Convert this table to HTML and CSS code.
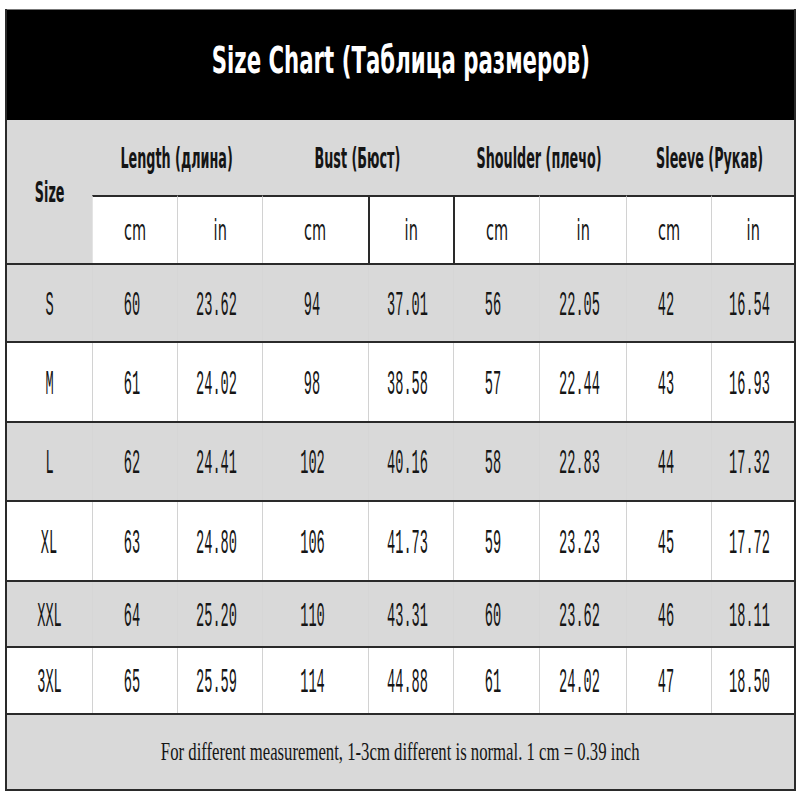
FILE: index.html
```html
<!DOCTYPE html>
<html lang="en">
<head>
<meta charset="utf-8">
<title>Size Chart</title>
<link rel="stylesheet" href="styles.css">
</head>
<body>
<div class="chart">
  <div class="title"><span class="title-text">Size Chart (Таблица размеров)</span></div>
  <div class="head">
    <div class="h-size"><span class="hd">Size</span></div>
    <div class="h-group"><span class="hd">Length (длина)</span></div>
    <div class="h-group"><span class="hd">Bust (Бюст)</span></div>
    <div class="h-group"><span class="hd">Shoulder (плечо)</span></div>
    <div class="h-group"><span class="hd">Sleeve (Рукав)</span></div>
    <div class="h-unit first"><span class="hd">cm</span></div>
    <div class="h-unit"><span class="hd">in</span></div>
    <div class="h-unit"><span class="hd">cm</span></div>
    <div class="h-unit dark"><span class="hd">in</span></div>
    <div class="h-unit dark"><span class="hd">cm</span></div>
    <div class="h-unit"><span class="hd">in</span></div>
    <div class="h-unit"><span class="hd">cm</span></div>
    <div class="h-unit"><span class="hd">in</span></div>
  </div>
  <div class="row gray r1">
    <div class="c"><span class="n">S</span></div><div class="c"><span class="n">60</span></div><div class="c"><span class="n">23.62</span></div><div class="c"><span class="n">94</span></div><div class="c"><span class="n">37.01</span></div><div class="c"><span class="n">56</span></div><div class="c"><span class="n">22.05</span></div><div class="c"><span class="n">42</span></div><div class="c"><span class="n">16.54</span></div>
  </div>
  <div class="row white r2">
    <div class="c"><span class="n">M</span></div><div class="c"><span class="n">61</span></div><div class="c"><span class="n">24.02</span></div><div class="c"><span class="n">98</span></div><div class="c"><span class="n">38.58</span></div><div class="c"><span class="n">57</span></div><div class="c"><span class="n">22.44</span></div><div class="c"><span class="n">43</span></div><div class="c"><span class="n">16.93</span></div>
  </div>
  <div class="row gray r3">
    <div class="c"><span class="n">L</span></div><div class="c"><span class="n">62</span></div><div class="c"><span class="n">24.41</span></div><div class="c"><span class="n">102</span></div><div class="c"><span class="n">40.16</span></div><div class="c"><span class="n">58</span></div><div class="c"><span class="n">22.83</span></div><div class="c"><span class="n">44</span></div><div class="c"><span class="n">17.32</span></div>
  </div>
  <div class="row white r4">
    <div class="c"><span class="n">XL</span></div><div class="c"><span class="n">63</span></div><div class="c"><span class="n">24.80</span></div><div class="c"><span class="n">106</span></div><div class="c"><span class="n">41.73</span></div><div class="c"><span class="n">59</span></div><div class="c"><span class="n">23.23</span></div><div class="c"><span class="n">45</span></div><div class="c"><span class="n">17.72</span></div>
  </div>
  <div class="row gray r5">
    <div class="c"><span class="n">XXL</span></div><div class="c"><span class="n">64</span></div><div class="c"><span class="n">25.20</span></div><div class="c"><span class="n">110</span></div><div class="c"><span class="n">43.31</span></div><div class="c"><span class="n">60</span></div><div class="c"><span class="n">23.62</span></div><div class="c"><span class="n">46</span></div><div class="c"><span class="n">18.11</span></div>
  </div>
  <div class="row white r6">
    <div class="c"><span class="n">3XL</span></div><div class="c"><span class="n">65</span></div><div class="c"><span class="n">25.59</span></div><div class="c"><span class="n">114</span></div><div class="c"><span class="n">44.88</span></div><div class="c"><span class="n">61</span></div><div class="c"><span class="n">24.02</span></div><div class="c"><span class="n">47</span></div><div class="c"><span class="n">18.50</span></div>
  </div>
  <div class="note"><span class="note-text">For different measurement, 1-3cm different is normal. 1 cm = 0.39 inch</span></div>
</div>
</body>
</html>
```

FILE: styles.css
```css
html, body {
  margin: 0;
  padding: 0;
  background: #ffffff;
}

.chart {
  box-sizing: border-box;
  width: 791px;
  margin: 9px 0 0 5px;
  border-left: 2px solid #2a2a2a;
  border-right: 2px solid #2a2a2a;
  border-bottom: 2px solid #2a2a2a;
  color: #151515;
}

.title {
  height: 111px;
  background: #000000;
  border-top: 1px solid #777;
  box-sizing: border-box;
  display: flex;
  align-items: center;
  justify-content: center;
  padding-bottom: 10px;
}

.title-text {
  display: inline-block;
  font-family: "DejaVu Sans", sans-serif;
  font-weight: bold;
  font-size: 38px;
  color: #ffffff;
  white-space: nowrap;
  transform: scaleX(0.56);
}

.head,
.row {
  display: grid;
  grid-template-columns: 85px 85px 85px 106px 85px 86px 87px 85px 83px;
}

.head {
  grid-template-rows: 75px 68px;
  background: #d9d9d9;
}

.hd {
  display: inline-block;
  font-family: "DejaVu Sans", sans-serif;
  font-weight: bold;
  font-size: 29px;
  white-space: nowrap;
  transform: scaleX(0.44);
}

.h-size {
  grid-row: 1 / 3;
  display: flex;
  align-items: center;
  justify-content: center;
}

.h-group {
  grid-column: span 2;
  display: flex;
  align-items: center;
  justify-content: center;
}

.h-unit {
  box-sizing: border-box;
  background: #ffffff;
  border-top: 2px solid #2a2a2a;
  border-left: 1px solid #d2d2d2;
  display: flex;
  align-items: center;
  justify-content: center;
}

.h-unit .hd {
  font-weight: normal;
  transform: scaleX(0.5);
}

.h-unit.first {
  border-left-color: #e4e4e4;
}

.h-unit.dark {
  border-left: 2px solid #2a2a2a;
}

.row {
  box-sizing: border-box;
  border-top: 2px solid #2a2a2a;
}

.row.gray { background: #d9d9d9; }
.row.white { background: #ffffff; }

.r1 { height: 78px; }
.r2 { height: 80px; }
.r3 { height: 79px; }
.r4 { height: 80px; }
.r5 { height: 66px; }
.r6 { height: 67px; }

.c {
  box-sizing: border-box;
  display: flex;
  align-items: center;
  justify-content: center;
  border-left: 1px solid #d2d2d2;
  padding-right: 6px;
}

.c:first-child {
  border-left: none;
  padding-right: 0;
}

.row.gray .c {
  border-left-color: #d6d6d6;
}

.n {
  display: inline-block;
  font-family: "Liberation Mono", monospace;
  font-size: 35px;
  line-height: 1;
  white-space: nowrap;
  transform: scaleX(0.39);
  padding-top: 6px;
}

.note {
  box-sizing: border-box;
  height: 76px;
  border-top: 2px solid #2a2a2a;
  background: #d9d9d9;
  display: flex;
  align-items: center;
  justify-content: center;
}

.note-text {
  display: inline-block;
  font-family: "Liberation Serif", serif;
  font-size: 26px;
  white-space: nowrap;
  transform: scaleX(0.643);
}
```
